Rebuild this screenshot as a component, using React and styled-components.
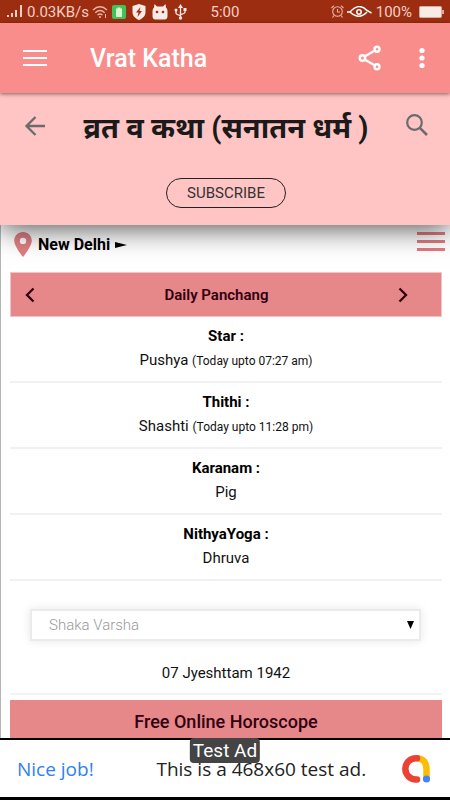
import React, { useState } from 'react';
import styled, { createGlobalStyle } from 'styled-components';

const GlobalStyle = createGlobalStyle`
  * {
    box-sizing: border-box;
  }

  body {
    margin: 0;
    background: #fff;
    color: #111;
    font-family: Roboto, "Noto Sans", sans-serif;
    font-size: 15px;
  }

  button {
    font-family: inherit;
    padding: 0;
    border: 0;
    background: none;
    cursor: pointer;
  }

  svg {
    display: block;
  }
`;

const Page = styled.div`
  display: flex;
  flex-direction: column;
  height: 100vh;
  overflow: hidden;
`;

const StatusBar = styled.div`
  display: grid;
  flex: none;
  grid-template-columns: 1fr auto 1fr;
  align-items: center;
  height: 23px;
  padding: 0 6px;
  background: #9d2d10;
  color: #f3cfc6;
  font-size: 15px;
`;

const StatusGroup = styled.div`
  display: flex;
  align-items: center;
  justify-content: ${props => props.$end ? 'flex-end' : 'flex-start'};
  gap: ${props => props.$gap || '4px'};
  min-width: 0;
`;

const AppBar = styled.header`
  position: relative;
  z-index: 2;
  display: flex;
  flex: none;
  align-items: center;
  height: 70px;
  padding: 0 20px 0 23px;
  background: #f98d8c;
  color: #fff;
  box-shadow: 0 1px 4px rgba(0, 0, 0, .5);
`;

const AppTitle = styled.h1`
  flex: 1;
  margin: 0 0 0 43px;
  font-size: 25px;
  font-weight: 500;
`;

const IconButton = styled.button`
  flex: none;
  color: ${props => props.$color || 'inherit'};
`;

const BarActions = styled.div`
  display: flex;
  align-items: center;
  gap: 32px;
`;

const BlogHeader = styled.section`
  position: relative;
  z-index: 1;
  flex: none;
  height: 132px;
  padding: 13px 21px 0 23px;
  background: #ffc4c4;
  box-shadow: 0 2px 28px rgba(0, 0, 0, .75);
  text-align: center;
`;

const BlogTop = styled.div`
  display: flex;
  align-items: center;
  justify-content: space-between;
  height: 40px;
  margin-bottom: 32px;
`;

const BlogTitle = styled.h2`
  margin: 0;
  color: #1a1a1a;
  font-size: 29px;
  font-weight: 700;
  white-space: nowrap;
`;

const SubscribeButton = styled.button`
  width: 120px;
  height: 30px;
  border: 1px solid #222;
  border-radius: 15px;
  color: #333;
  font-size: 15px;
`;

const Content = styled.main`
  flex: 1;
  min-height: 0;
  padding: 0 8px 0 9px;
  border-left: 1px solid #b5b5b5;
  overflow: hidden;
`;

const LocationRow = styled.div`
  display: flex;
  align-items: flex-start;
  justify-content: space-between;
  height: 47px;
  padding: 7px 0 0 3px;
  margin-right: -3px;
`;

const LocationLink = styled.a`
  display: flex;
  align-items: center;
  gap: 5px;
  color: #000;
  font-size: 16px;
  font-weight: 700;
  text-decoration: none;
`;

const PanchangBar = styled.div`
  display: flex;
  align-items: center;
  justify-content: space-between;
  height: 45px;
  padding: 0 33px 0 14px;
  border: 1px solid #f3c4c6;
  background: #e68789;
  color: #300010;
`;

const PanchangTitle = styled.h3`
  margin: 0;
  font-size: 15px;
  font-weight: 600;
`;

const Rows = styled.dl`
  margin: 0;
`;

const Row = styled.div`
  height: 66px;
  padding-top: 7px;
  border-bottom: 2px solid #f1f1f1;
  line-height: 24px;
  text-align: center;
`;

const Term = styled.dt`
  color: #000;
  font-weight: 700;
`;

const Value = styled.dd`
  margin: 0;

  small {
    font-size: 12px;
  }
`;

const SelectBox = styled.label`
  position: relative;
  display: block;
  margin: 28px 21px 0 20px;
`;

const Select = styled.select`
  display: block;
  width: 100%;
  height: 32px;
  padding: 0 17px;
  border: 2px solid #ebebeb;
  border-radius: 0;
  appearance: none;
  background: #fff;
  box-shadow: 0 0 10px rgba(0, 0, 0, .1);
  color: #999;
  font-family: inherit;
  font-size: 15px;
  font-weight: 300;
`;

const SelectArrow = styled.svg`
  position: absolute;
  top: 12px;
  right: 7px;
  pointer-events: none;
`;

const DateLine = styled.p`
  height: 54px;
  margin: 0 0 5px;
  padding-top: 20px;
  border-bottom: 2px solid #f3f3f3;
  line-height: 24px;
  text-align: center;
`;

const HoroscopeTitle = styled.h3`
  height: 43px;
  margin: 0;
  background: #e68789;
  color: #300010;
  font-size: 18px;
  font-weight: 500;
  line-height: 43px;
  text-align: center;
`;

const AdBanner = styled.aside`
  position: relative;
  display: flex;
  flex: none;
  align-items: center;
  justify-content: space-between;
  height: 62px;
  padding: 0 17px;
  border-top: 2px solid #000;
  border-bottom: 3px solid #000;
  background: #fff;
  font-family: "Open Sans", sans-serif;
  font-size: 19px;
`;

const AdLink = styled.a`
  color: #2f80f5;
  font-weight: 500;
  text-decoration: none;
`;

const AdText = styled.span`
  padding-left: 28px;
  color: #222;
`;

const AdBadge = styled.span`
  position: absolute;
  top: -2px;
  left: 50%;
  padding: 0 3px;
  border-radius: 4px;
  background: #444;
  color: #fff;
  font-family: Roboto, sans-serif;
  font-size: 19px;
  line-height: 25px;
  transform: translateX(-50%);
`;

const panchang = [
  { term: 'Star :', value: 'Pushya', note: '(Today upto 07:27 am)' },
  { term: 'Thithi :', value: 'Shashti', note: '(Today upto 11:28 pm)' },
  { term: 'Karanam :', value: 'Pig' },
  { term: 'NithyaYoga :', value: 'Dhruva' }
];

const SignalIcon = () => (
  <svg width="18" height="13" viewBox="0 0 18 13" fill="#f3cfc6">
    <path d="M1 10h2v2H1zM5 8h2v4H5zM9 5h2v7H9zM14 0h2v12h-2z" />
  </svg>
);

const WifiIcon = () => (
  <svg width="16" height="14" viewBox="0 0 16 14" fill="none" stroke="#e9b5a8" strokeWidth="1.4">
    <path d="M1 5q7-6.500 14 0M3.300 7.700q4.700-4.300 9.400 0M5.500 10q2.500-2.200 5 0" />
    <circle cx="8" cy="12" r="1" fill="#e9b5a8" stroke="none" />
    <path d="M13.500 9v4" strokeWidth="1" />
  </svg>
);

const GreenIcon = () => (
  <svg width="14" height="14" viewBox="0 0 14 14">
    <rect width="14" height="14" rx="2" fill="#3fc45a" />
    <path d="M4 3.500h1.500v-1h3v1H10V12H4z" fill="#d8f5d0" />
  </svg>
);

const ShieldIcon = () => (
  <svg width="14" height="16" viewBox="0 0 14 16">
    <path d="M7 0l6.500 2v6c0 4-3 6.500-6.500 8C3.500 14.500.5 12 .5 8V2z" fill="#faeae6" />
    <path d="M8.500 3L4 8.500h2.500L5.500 13 10 7H7.500z" fill="#9d2d10" />
  </svg>
);

const DroidIcon = () => (
  <svg width="16" height="16" viewBox="0 0 16 16">
    <path d="M2.500 0l2.500 2.500h6L13.500 0l.5 3.500q1.500 1 1.500 4V12q0 3.500-3 3.500h-9q-3 0-3-3.500V7.500q0-3 1.500-4z" fill="#faeae6" />
    <circle cx="5" cy="8" r="1.300" fill="#9d2d10" />
    <circle cx="11" cy="8" r="1.300" fill="#9d2d10" />
  </svg>
);

const UsbIcon = () => (
  <svg width="13" height="16" viewBox="0 0 13 16" fill="none" stroke="#faeae6" strokeWidth="1.3">
    <path d="M6.500 3v11M2 6v3q0 1.500 4.500 2.500M11 5v3q0 1.500-4.500 2.500" />
    <path d="M6.500 0L9 4H4z" fill="#faeae6" stroke="none" />
    <circle cx="6.500" cy="14" r="1.700" fill="#faeae6" stroke="none" />
    <circle cx="2" cy="6" r="1.500" fill="#faeae6" stroke="none" />
    <path d="M9.500 4h3v3h-3z" fill="#faeae6" stroke="none" />
  </svg>
);

const AlarmIcon = () => (
  <svg width="13" height="13" viewBox="0 0 13 13" fill="none" stroke="#e9b5a8" strokeWidth="1.1">
    <circle cx="6.500" cy="6.500" r="4.800" />
    <path d="M6.500 4v3h2.500M.5 3L3 .700M12.500 3L10 .700M3 10.500l-1.500 2M10 10.500l1.500 2" />
  </svg>
);

const EyeIcon = () => (
  <svg width="25" height="12" viewBox="0 0 25 12" fill="none" stroke="#fff" strokeWidth="1.500">
    <path d="M0 6h3Q12 -4 20 4.500L24.500 7M3 6q9 8.500 17 0" />
    <circle cx="12" cy="6" r="2.200" />
  </svg>
);

const BatteryIcon = () => (
  <svg width="25" height="12" viewBox="0 0 25 12">
    <rect x=".5" y=".5" width="22" height="11" rx="1" fill="#f8ebe6" stroke="#dda99c" />
    <path d="M23 4h2v4h-2z" fill="#dda99c" />
  </svg>
);

const Burger = ({ width, height, bar }) => (
  <svg width={width} height={height} viewBox={`0 0 ${width} ${height}`} fill="currentColor">
    <rect width={width} height={bar} />
    <rect y={(height - bar) / 2} width={width} height={bar} />
    <rect y={height - bar} width={width} height={bar} />
  </svg>
);

const ShareIcon = () => (
  <svg width="24" height="26" viewBox="0 0 24 26" fill="none" stroke="#fff" strokeWidth="2.400">
    <path d="M6.500 11.500L17 5.500M6.500 14.500L17 20.500" />
    <circle cx="4.500" cy="13" r="2.700" />
    <circle cx="19" cy="4.300" r="2.500" />
    <circle cx="19" cy="21.700" r="2.500" />
  </svg>
);

const MoreIcon = () => (
  <svg width="16" height="22" viewBox="0 0 16 22" fill="#fff">
    <circle cx="8" cy="3.500" r="2.600" />
    <circle cx="8" cy="11" r="2.600" />
    <circle cx="8" cy="18.500" r="2.600" />
  </svg>
);

const BackIcon = () => (
  <svg width="24" height="22" viewBox="0 0 24 22" fill="none" stroke="#6b6b6b" strokeWidth="2.300">
    <path d="M22 11H4M12.500 2L3.500 11l9 9" />
  </svg>
);

const SearchIcon = () => (
  <svg width="24" height="26" viewBox="0 0 24 26" fill="none" stroke="#6b6b6b" strokeWidth="2.200">
    <circle cx="9.500" cy="9.500" r="7.300" />
    <path d="M14.800 14.800L22 22" strokeWidth="2.600" />
  </svg>
);

const PinIcon = () => (
  <svg width="20" height="25" viewBox="0 0 20 25">
    <path
      d="M10 0C5 0 1.200 3.800 1.200 8.800 1.200 14.500 10 25 10 25s8.800-10.500 8.800-16.200C18.800 3.800 15 0 10 0zm0 5.700a3.200 3.200 0 1 1 0 6.400 3.200 3.200 0 0 1 0-6.400z"
      fill="#e07f82"
    />
  </svg>
);

const Chevron = ({ d }) => (
  <svg width="10" height="16" viewBox="0 0 10 16" fill="none" stroke="#300010" strokeWidth="2.300">
    <path d={d} />
  </svg>
);

const AdLogo = () => (
  <svg width="32" height="30" viewBox="0 0 32 30" fill="none">
    <path d="M15.500 4.200C22 4.200 25.500 8.500 25.500 15v9" stroke="#fbbc04" strokeWidth="6.500" />
    <path d="M16 4.200H15a10.500 10.500 0 0 0 0 21.300h1" stroke="#ea4335" strokeWidth="6.500" strokeLinecap="round" />
    <circle cx="25.500" cy="25" r="3.600" fill="#4285f4" />
  </svg>
);

const App = () => {
  const [calendar, setCalendar] = useState('shaka');

  return (
    <Page>
      <GlobalStyle />
      <StatusBar>
        <StatusGroup>
          <StatusGroup $gap="3px">
            <SignalIcon />
            <span>0.03KB/s</span>
            <WifiIcon />
          </StatusGroup>
          <StatusGroup $gap="6px">
            <GreenIcon />
            <ShieldIcon />
            <DroidIcon />
            <UsbIcon />
          </StatusGroup>
        </StatusGroup>
        <span>5:00</span>
        <StatusGroup $end>
          <StatusGroup $gap="3px">
            <AlarmIcon />
            <EyeIcon />
          </StatusGroup>
          <StatusGroup $gap="7px">
            <span>100%</span>
            <BatteryIcon />
          </StatusGroup>
        </StatusGroup>
      </StatusBar>

      <AppBar>
        <IconButton aria-label="Menu"><Burger width={24} height={16} bar={2} /></IconButton>
        <AppTitle>Vrat Katha</AppTitle>
        <BarActions>
          <IconButton aria-label="Share"><ShareIcon /></IconButton>
          <IconButton aria-label="More"><MoreIcon /></IconButton>
        </BarActions>
      </AppBar>

      <BlogHeader>
        <BlogTop>
          <IconButton aria-label="Back"><BackIcon /></IconButton>
          <BlogTitle lang="hi">व्रत व कथा (सनातन धर्म )</BlogTitle>
          <IconButton aria-label="Search"><SearchIcon /></IconButton>
        </BlogTop>
        <SubscribeButton>SUBSCRIBE</SubscribeButton>
      </BlogHeader>

      <Content>
        <LocationRow>
          <LocationLink href="#location">
            <PinIcon />
            New Delhi
            <svg width="12" height="6" viewBox="0 0 12 6"><path d="M0 0l12 3L0 6z" /></svg>
          </LocationLink>
          <IconButton aria-label="Sections" $color="#e07b7e">
            <Burger width={28} height={19} bar={3} />
          </IconButton>
        </LocationRow>

        <PanchangBar>
          <IconButton aria-label="Previous day"><Chevron d="M8.500 1.500L2 8l6.500 6.500" /></IconButton>
          <PanchangTitle>Daily Panchang</PanchangTitle>
          <IconButton aria-label="Next day"><Chevron d="M1.500 1.500L8 8l-6.500 6.500" /></IconButton>
        </PanchangBar>

        <Rows>
          {panchang.map(({ term, value, note }) => (
            <Row key={term}>
              <Term>{term}</Term>
              <Value>{value} {note && <small>{note}</small>}</Value>
            </Row>
          ))}
        </Rows>

        <SelectBox>
          <Select aria-label="Calendar" value={calendar} onChange={evt => setCalendar(evt.target.value)}>
            <option value="shaka">Shaka Varsha</option>
          </Select>
          <SelectArrow width="7" height="8" viewBox="0 0 7 8"><path d="M0 0h7L3.500 8z" /></SelectArrow>
        </SelectBox>
        <DateLine>07 Jyeshttam 1942</DateLine>
        <HoroscopeTitle>Free Online Horoscope</HoroscopeTitle>
      </Content>

      <AdBanner>
        <AdLink href="#ad">Nice job!</AdLink>
        <AdText>This is a 468x60 test ad.</AdText>
        <AdLogo />
        <AdBadge>Test Ad</AdBadge>
      </AdBanner>
    </Page>
  );
};

export default App;
